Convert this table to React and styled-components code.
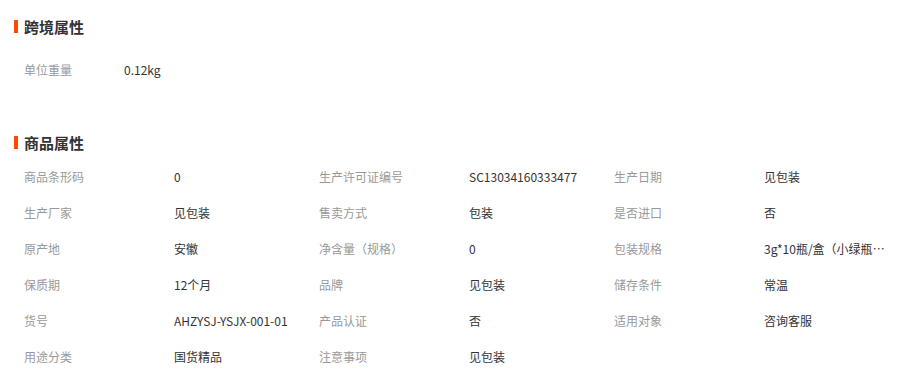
import styled, { createGlobalStyle } from "styled-components";

const GlobalStyle = createGlobalStyle`
    body {
        margin: 0;
        background: #fff;
        font-family: "Noto Sans CJK SC", "Noto Sans", sans-serif;
        color: #333;
    }
`

const Page = styled.div`
    padding-left: 14px;
    width: 891px;
`

const Section = styled.section`
    margin-top: ${props => props.$top}px;
`

const Title = styled.h3`
    display: flex;
    align-items: center;
    margin: 0;
    height: 20px;
    font-size: 15px;
    font-weight: bold;
    color: #333;
`

const Bar = styled.span`
    display: inline-block;
    width: 4px;
    height: 13px;
    background: #ff4a00;
    margin-right: 6px;
`

const Grid = styled.ul`
    display: grid;
    grid-template-columns: repeat(3, 295px);
    list-style: none;
    margin: ${props => props.$gap}px 0 0;
    padding: 0 0 0 10px;
`

const Item = styled.li`
    display: flex;
    height: 36px;
    line-height: 36px;
    font-size: 12px;
`

const Label = styled.span`
    flex: none;
    width: ${props => props.$width}px;
    color: #999;
`

const Value = styled.span`
    max-width: 126px;
    color: #333;
    white-space: nowrap;
    overflow: hidden;
    text-overflow: ellipsis;
`

const crossBorder = [
    ["单位重量", "0.12kg"],
]

const goods = [
    ["商品条形码", "0"],
    ["生产许可证编号", "SC13034160333477"],
    ["生产日期", "见包装"],
    ["生产厂家", "见包装"],
    ["售卖方式", "包装"],
    ["是否进口", "否"],
    ["原产地", "安徽"],
    ["净含量（规格）", "0"],
    ["包装规格", "3g*10瓶/盒（小绿瓶装）"],
    ["保质期", "12个月"],
    ["品牌", "见包装"],
    ["储存条件", "常温"],
    ["货号", "AHZYSJ-YSJX-001-01"],
    ["产品认证", "否"],
    ["适用对象", "咨询客服"],
    ["用途分类", "国货精品"],
    ["注意事项", "见包装"],
]

function AttrSection({ title, items, top, gap, labelWidth }) {
    return (
        <Section $top={top}>
            <Title><Bar />{title}</Title>
            <Grid $gap={gap}>
                {items.map((item, index) =>
                    <Item key={index}>
                        <Label $width={labelWidth}>{item[0]}</Label>
                        <Value>{item[1]}</Value>
                    </Item>
                )}
            </Grid>
        </Section>
    )
}

export default function App() {
    return (
        <Page>
            <GlobalStyle />
            <AttrSection title="跨境属性" items={crossBorder} top={16} gap={16} labelWidth={100} />
            <AttrSection title="商品属性" items={goods} top={44} gap={7} labelWidth={150} />
        </Page>
    )
}
